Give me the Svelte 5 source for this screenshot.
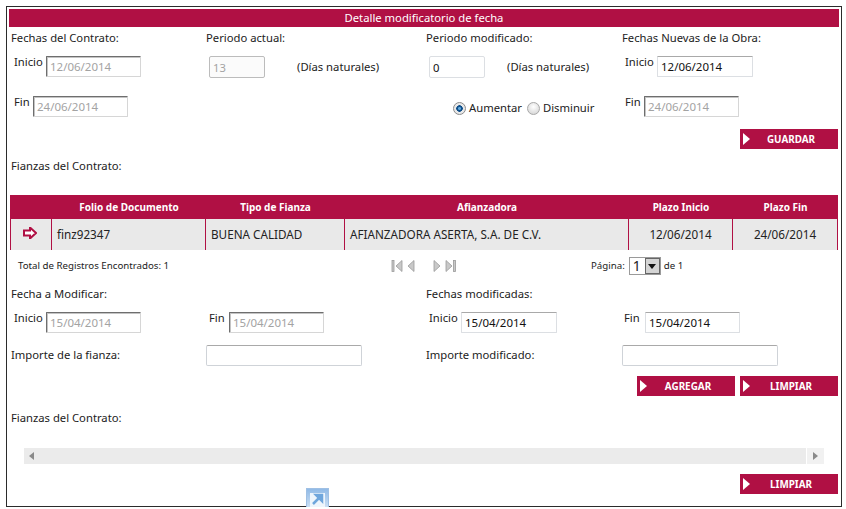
<script>
  const cols = [
    { w: 42, t: '', icon: true },
    { w: 154, t: 'Folio de Documento', v: 'finz92347' },
    { w: 139, t: 'Tipo de Fianza', v: 'BUENA CALIDAD' },
    { w: 284, t: 'Afianzadora', v: 'AFIANZADORA ASERTA, S.A. DE C.V.' },
    { w: 104, t: 'Plazo Inicio', v: '12/06/2014', c: true },
    { w: 105, t: 'Plazo Fin', v: '24/06/2014', c: true }
  ];
</script>

{#snippet btn(label, w)}
  <button class="btn" style:width="{w}px" type="button">
    <svg class="tri" width="7" height="12" viewBox="0 0 7 12"><path d="M0 0L7 6L0 12Z" fill="#fff" /></svg>
    <span>{label}</span>
  </button>
{/snippet}

{#snippet field(label, value, off, w, lw)}
  <div class="field">
    <span class="flabel" style:width="{lw}px">{label}</span>
    <input class:off class="date" style:width="{w}px" {value} readonly />
  </div>
{/snippet}

<div class="frame">
  <div class="title">Detalle modificatorio de fecha</div>

  <div class="grid r1">
    <div>Fechas del Contrato:</div>
    <div>Periodo actual:</div>
    <div>Periodo modificado:</div>
    <div>Fechas Nuevas de la Obra:</div>
  </div>

  <div class="grid r2">
    <div class="ind">{@render field('Inicio', '12/06/2014', true, 95, 32)}</div>
    <div class="ind days"><input class="num dis" value="13" readonly /><span class="d1">(Días naturales)</span></div>
    <div class="ind days"><input class="num" value="0" readonly /><span class="d2">(Días naturales)</span></div>
    <div class="ind">{@render field('Inicio', '12/06/2014', false, 96, 32)}</div>
  </div>

  <div class="grid r3">
    <div class="ind">{@render field('Fin', '24/06/2014', true, 95, 19)}</div>
    <div></div>
    <div class="radios">
      <span class="radio on"></span><span class="rl">Aumentar</span>
      <span class="radio"></span><span class="rl">Disminuir</span>
    </div>
    <div class="ind">{@render field('Fin', '24/06/2014', true, 95, 19)}</div>
  </div>

  <div class="actions a1">{@render btn('GUARDAR', 98)}</div>
  <div class="sect s1">Fianzas del Contrato:</div>

  <div class="table">
    <div class="thead">
      {#each cols as c}<div class="th" style:width="{c.w}px">{c.t}</div>{/each}
    </div>
    <div class="trow">
      {#each cols as c}
        <div class="td" class:c={c.c} class:ic={c.icon} style:width="{c.w}px">
          {#if c.icon}
            <svg width="14" height="12" viewBox="0 0 14 12"><path d="M1 3.5H7V0.500L13 6L7 11.500V8.500H1Z" fill="#fff" stroke="#b01044" stroke-width="2" /></svg>
          {:else}{c.v}{/if}
        </div>
      {/each}
    </div>
  </div>

  <div class="pager">
    <div class="total">Total de Registros Encontrados: 1</div>
    <div class="nav">
      <svg width="70" height="12" viewBox="0 0 70 12">
        <g fill="#c9c9c9" stroke="#9a9a9a" stroke-width="0.8">
          <rect x="1" y="0.500" width="2" height="11" />
          <path d="M11 0.500V11.500L5 6Z" />
          <path d="M23 0.500V11.500L17 6Z" />
          <path d="M43 0.500V11.500L49 6Z" />
          <path d="M55 0.500V11.500L61 6Z" />
          <rect x="62.500" y="0.500" width="2" height="11" />
        </g>
      </svg>
    </div>
    <div class="page">
      <span>Página:</span>
      <div class="sel"><span class="selv">1</span><span class="selb"><svg width="8" height="5" viewBox="0 0 8 5"><path d="M0 0H8L4 5Z" fill="#111" /></svg></span></div>
      <span>de 1</span>
    </div>
  </div>

  <div class="grid r4">
    <div>Fecha a Modificar:</div>
    <div></div>
    <div>Fechas modificadas:</div>
    <div></div>
  </div>

  <div class="grid r5">
    <div class="ind">{@render field('Inicio', '15/04/2014', true, 95, 32)}</div>
    <div class="ind">{@render field('Fin', '15/04/2014', true, 95, 20)}</div>
    <div class="ind">{@render field('Inicio', '15/04/2014', false, 96, 32)}</div>
    <div class="ind2">{@render field('Fin', '15/04/2014', false, 95, 21)}</div>
  </div>

  <div class="grid r6">
    <div>Importe de la fianza:</div>
    <div><input class="wide" readonly /></div>
    <div>Importe modificado:</div>
    <div><input class="wide" readonly /></div>
  </div>

  <div class="actions a2">{@render btn('AGREGAR', 98)}{@render btn('LIMPIAR', 98)}</div>
  <div class="sect s2">Fianzas del Contrato:</div>

  <div class="hscroll">
    <svg width="5" height="8" viewBox="0 0 5 8"><path d="M5 0V8L0 4Z" fill="#8a8a8a" /></svg>
    <span class="end"><svg width="5" height="8" viewBox="0 0 5 8"><path d="M0 0V8L5 4Z" fill="#8a8a8a" /></svg></span>
  </div>

  <div class="actions a3">{@render btn('LIMPIAR', 98)}</div>

  <svg class="shortcut" width="23" height="21" viewBox="0 0 23 21">
    <defs><linearGradient id="sg" x1="0" y1="0" x2="0" y2="1"><stop offset="0" stop-color="#8fb9e6" /><stop offset="1" stop-color="#cfe2f5" /></linearGradient></defs>
    <rect x="0.500" y="0.500" width="22" height="20" fill="url(#sg)" stroke="#9fc0e4" />
    <rect x="4" y="5" width="15" height="14" fill="#eef5fc" />
    <path d="M7 16L13 10M10 7H16V13Z" stroke="#6fa6dc" stroke-width="2.500" fill="#6fa6dc" />
  </svg>
</div>

<style>
  :global(body) { margin: 0; background: #fff; }
  .frame {
    position: relative;
    box-sizing: border-box;
    width: 836px;
    height: 501px;
    margin: 6px 0 0 6px;
    padding: 2px;
    border: 1px solid #2b2b2b;
    font: 11.250px/14px "Noto Sans", Tahoma, sans-serif;
    color: #222;
  }
  .title {
    height: 18px;
    background: #b01044;
    color: #fff;
    text-align: center;
    line-height: 18px;
  }
  .grid {
    display: grid;
    grid-template-columns: 195px 220px 196px 1fr;
    padding-left: 2px;
  }
  .r1 { margin-top: 4px; }
  .r2 { margin-top: 11px; height: 22px; }
  .r3 { margin-top: 18px; height: 22px; }
  .r4 { margin-top: 5px; }
  .r5 { margin-top: 11px; height: 21px; }
  .r6 { margin-top: 11px; height: 22px; align-items: center; }
  .ind { padding-left: 3px; }
  .ind2 { padding-left: 2px; }
  .field { display: flex; align-items: flex-start; }
  .flabel { line-height: 13px; margin-top: -1px; }
  input {
    box-sizing: border-box;
    font: inherit;
    color: #111;
    margin: 0;
    padding: 2px 3px;
    background: #fff;
    outline: none;
  }
  .date {
    height: 21px;
    border: 1px solid #dcdfe3;
    border-top-color: #a9a9a9;
    border-radius: 1px;
    font-size: 11.500px;
  }
  .date.off {
    color: #a3a3a3;
    background: #fff;
    border-color: #d6d6d6;
    border-top: 1px solid #6e6e6e;
    border-left: 1px solid #6e6e6e;
    box-shadow: inset 1px 1px 0 #c4c4c4;
  }
  .days { display: flex; align-items: center; }
  .days span { margin-top: -1px; }
  .d1 { margin-left: 32px; }
  .d2 { margin-left: 22px; }
  .num {
    width: 56px;
    height: 22px;
    border: 1px solid #dcdfe3;
    border-radius: 2px;
  }
  .num.dis { color: #a3a3a3; border-color: #bcbcbc; background: #fbfbfb; }
  .radios { display: flex; align-items: center; height: 22px; padding-left: 27px; margin-top: 1px; }
  .radio {
    box-sizing: border-box;
    width: 13px;
    height: 13px;
    border-radius: 50%;
    border: 1px solid #a8a8a8;
    background: radial-gradient(circle at 50% 35%, #fff, #cfcfcf);
  }
  .radio.on { background: radial-gradient(circle, #5fa8dc 0 1px, #0f4f8a 2px 3px, #e8e8e8 3.500px); border-color: #8a8a8a; }
  .rl { margin: 0 5px 0 3px; }
  .actions { display: flex; justify-content: flex-end; gap: 5px; padding-right: 1px; }
  .a1 { margin-top: 11px; }
  .a2 { margin-top: 10px; }
  .a3 { margin-top: 10px; }
  .btn {
    position: relative;
    box-sizing: border-box;
    height: 20px;
    padding: 0 0 0 4px;
    border: 0;
    background: #b01044;
    color: #fff;
    font: 700 9.900px/20px "Noto Sans", Tahoma, sans-serif;
    text-align: center;
  }
  .tri { position: absolute; left: 3px; top: 4px; }
  .sect { padding-left: 2px; }
  .s1 { margin-top: 10px; }
  .s2 { margin-top: 15px; }
  .table { margin: 22px 0 0 1px; width: 828px; }
  .thead { display: flex; height: 24px; background: #b01044; }
  .th {
    color: #fff;
    font-weight: 700;
    font-size: 10px;
    line-height: 24px;
    text-align: center;
  }
  .trow {
    display: flex;
    height: 31px;
    background: #e9e9e9;
    border-left: 1px solid #b01044;
  }
  .td {
    box-sizing: border-box;
    border-right: 1px solid #b01044;
    padding: 0 5px;
    line-height: 31px;
    font-size: 11.700px;
    white-space: nowrap;
  }
  .td:first-child { width: 41px !important; }
  .td.c { text-align: center; }
  .td.ic { display: flex; align-items: center; justify-content: center; padding: 0 2px 4px 0; }
  .pager { display: flex; height: 32px; align-items: center; font-size: 9.700px; padding-left: 9px; }
  .total { width: 373px; }
  .nav { width: 200px; display: flex; align-items: center; }
  .page { display: flex; align-items: center; gap: 3px; }
  .sel {
    display: flex;
    box-sizing: border-box;
    width: 32px;
    height: 18px;
    border: 1px solid #9a9a9a;
    background: #fff;
    margin-left: 1px;
  }
  .selv { flex: 1; font-size: 14px; line-height: 15px; padding-left: 3px; }
  .selb {
    width: 15px;
    display: flex;
    align-items: center;
    justify-content: center;
    background: #d4d4d4;
    border: 1px solid #666;
    box-sizing: border-box;
  }
  .wide {
    width: 156px;
    height: 21px;
    border: 1px solid #cfd3d8;
    border-top-color: #a9a9a9;
    border-radius: 2px;
  }
  .hscroll {
    box-sizing: border-box;
    display: flex;
    align-items: center;
    justify-content: space-between;
    width: 800px;
    height: 16px;
    margin: 23px 0 0 15px;
    padding-left: 5px;
    background: #ebebeb;
  }
  .end {
    width: 17px;
    height: 16px;
    background: #f1f1f1;
    border-left: 1px solid #fff;
    display: flex;
    align-items: center;
    justify-content: center;
  }
  .shortcut { position: absolute; left: 299px; top: 481px; }
</style>
